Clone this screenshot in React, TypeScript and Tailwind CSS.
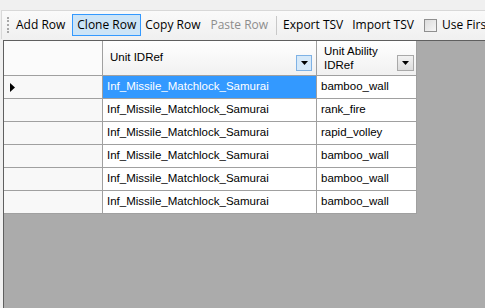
const rows = [
  { unit: "Inf_Missile_Matchlock_Samurai", ability: "bamboo_wall" },
  { unit: "Inf_Missile_Matchlock_Samurai", ability: "rank_fire" },
  { unit: "Inf_Missile_Matchlock_Samurai", ability: "rapid_volley" },
  { unit: "Inf_Missile_Matchlock_Samurai", ability: "bamboo_wall" },
  { unit: "Inf_Missile_Matchlock_Samurai", ability: "bamboo_wall" },
  { unit: "Inf_Missile_Matchlock_Samurai", ability: "bamboo_wall" },
];

function Arrow() {
  return (
    <svg width="7" height="4" viewBox="0 0 7 4">
      <path d="M0 0h7L3.5 4z" fill="#000" />
    </svg>
  );
}

export default function App() {
  const ui = { fontFamily: '"Open Sans", "Noto Sans", sans-serif' };
  const grid = { fontFamily: '"Liberation Sans", Arial, sans-serif' };

  return (
    <div className="w-[485px] h-[308px] flex flex-col bg-[#f0f0f0] overflow-hidden pt-[10px]">
      {/* toolbar */}
      <div
        className="h-[29px] ml-[1px] border-t border-l border-[#d8d8d8] bg-gradient-to-b from-[#fafafa] to-[#f0f0f0] flex items-center text-[12px] text-black whitespace-nowrap overflow-hidden"
        style={ui}
      >
        <div className="shrink-0 ml-[5px] w-[2px] h-[16px] border-l-2 border-dotted border-[#a8a8a8]" />
        <span className="shrink-0 ml-[6px] px-[1px]">Add Row</span>
        <span className="shrink-0 ml-[6px] h-[22px] px-[4px] flex items-center border border-[#3399ff] bg-[#cce4f7]">Clone Row</span>
        <span className="shrink-0 ml-[4px]">Copy Row</span>
        <span className="shrink-0 ml-[10px] text-[#8d8d8d]">Paste Row</span>
        <div className="shrink-0 ml-[8px] w-[1px] h-[19px] bg-[#c8c8c8]" />
        <span className="shrink-0 ml-[6px]">Export TSV</span>
        <span className="shrink-0 ml-[9px]">Import TSV</span>
        <div className="shrink-0 ml-[10px] w-[13px] h-[13px] border border-[#8f8f8f] bg-gradient-to-br from-[#dcdcdc] to-[#f6f6f6]" />
        <span className="shrink-0 ml-[5px]">Use First</span>
      </div>

      {/* grid */}
      <div className="flex-1 mt-[1px] ml-[3px] border-t border-l border-[#5f5f5f] bg-[#ababab]" style={grid}>
        <div className="grid grid-cols-[99px_214px_100px] w-fit text-[11.5px] text-black">
          <div className="h-[35px] bg-[#fbfbfb] border-r border-b border-[#a0a0a0]" />
          <div className="h-[35px] pl-[7px] pr-[4px] flex items-center justify-between bg-gradient-to-b from-[#ffffff] to-[#f1f1f1] border-r border-b border-[#a0a0a0]">
            <span>Unit IDRef</span>
            <div className="w-[16px] h-[16px] mt-[10px] flex items-center justify-center border border-[#7fb2e5] bg-[#d6e9f9]">
              <Arrow />
            </div>
          </div>
          <div className="h-[35px] pl-[7px] pr-[2px] flex items-center justify-between bg-gradient-to-b from-[#ffffff] to-[#f1f1f1] border-r border-b border-[#a0a0a0]">
            <span className="leading-[14px]">
              Unit Ability
              <br />
              IDRef
            </span>
            <div className="w-[17px] h-[16px] mt-[10px] flex items-center justify-center border border-[#a9a9a9] bg-gradient-to-b from-[#f2f2f2] to-[#dcdcdc]">
              <Arrow />
            </div>
          </div>

          {rows.map((r, i) => (
            <div key={i} className="contents">
              <div className="h-[23px] pl-[6px] flex items-center bg-[#f8f8f8] border-r border-b border-[#a0a0a0]">
                {i === 0 && (
                  <svg width="5" height="9" viewBox="0 0 5 9">
                    <path d="M0 0l5 4.5L0 9z" fill="#000" />
                  </svg>
                )}
              </div>
              <div
                className={
                  i === 0
                    ? "h-[23px] pl-[4px] flex items-center bg-[#3399ff] text-white border-r border-b border-[#a0a0a0]"
                    : "h-[23px] pl-[4px] flex items-center bg-white border-r border-b border-[#a0a0a0]"
                }
              >
                {r.unit}
              </div>
              <div className="h-[23px] pl-[4px] flex items-center bg-white border-r border-b border-[#a0a0a0]">
                {r.ability}
              </div>
            </div>
          ))}
        </div>
      </div>
    </div>
  );
}
